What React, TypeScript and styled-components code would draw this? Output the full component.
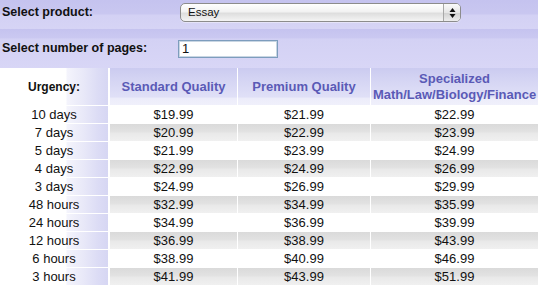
import styled, { createGlobalStyle } from 'styled-components';

const GlobalStyle = createGlobalStyle`
  body {
    margin: 0;
    background: #fff;
    font-family: 'Liberation Sans', Arial, sans-serif;
    color: #111;
  }
`;

interface PriceRow {
  urgency: string;
  standard: number;
  premium: number;
  special: number;
}

const rows: PriceRow[] = [
  { urgency: '10 days', standard: 19.99, premium: 21.99, special: 22.99 },
  { urgency: '7 days', standard: 20.99, premium: 22.99, special: 23.99 },
  { urgency: '5 days', standard: 21.99, premium: 23.99, special: 24.99 },
  { urgency: '4 days', standard: 22.99, premium: 24.99, special: 26.99 },
  { urgency: '3 days', standard: 24.99, premium: 26.99, special: 29.99 },
  { urgency: '48 hours', standard: 32.99, premium: 34.99, special: 35.99 },
  { urgency: '24 hours', standard: 34.99, premium: 36.99, special: 39.99 },
  { urgency: '12 hours', standard: 36.99, premium: 38.99, special: 43.99 },
  { urgency: '6 hours', standard: 38.99, premium: 40.99, special: 46.99 },
  { urgency: '3 hours', standard: 41.99, premium: 43.99, special: 51.99 },
];

const money = (n: number) => `$${n.toFixed(2)}`;

const PriceCalculator = (): JSX.Element => {
  return (
    <Wrapper>
      <GlobalStyle />
      <ProductRow>
        <Label>Select product:</Label>
        <SelectBox role="listbox" aria-label="Product">
          <SelectValue>Essay</SelectValue>
          <SelectArrows>
            <svg width="7" height="12" viewBox="0 0 7 12">
              <path d="M3.5 1 L6.5 5 L0.5 5 Z" fill="#111" />
              <path d="M0.5 7 L6.5 7 L3.5 11 Z" fill="#111" />
            </svg>
          </SelectArrows>
        </SelectBox>
      </ProductRow>
      <PagesRow>
        <Label>Select number of pages:</Label>
        <PagesInput type="text" defaultValue="1" aria-label="Number of pages" />
      </PagesRow>
      <Table>
        <colgroup>
          <col style={{ width: 110 }} />
          <col style={{ width: 128 }} />
          <col style={{ width: 133 }} />
          <col style={{ width: 167 }} />
        </colgroup>
        <thead>
          <tr>
            <UrgencyHead>Urgency:</UrgencyHead>
            <QualityHead>Standard Quality</QualityHead>
            <QualityHead>Premium Quality</QualityHead>
            <QualityHead $last>
              Specialized
              <br />
              Math/Law/Biology/Finance
            </QualityHead>
          </tr>
        </thead>
        <tbody>
          {rows.map((row, i) => (
            <tr key={row.urgency}>
              <UrgencyCell>{row.urgency}</UrgencyCell>
              <PriceCell $shaded={i % 2 === 1}>{money(row.standard)}</PriceCell>
              <PriceCell $shaded={i % 2 === 1}>{money(row.premium)}</PriceCell>
              <PriceCell $shaded={i % 2 === 1} $last>
                {money(row.special)}
              </PriceCell>
            </tr>
          ))}
        </tbody>
      </Table>
    </Wrapper>
  );
};

const Wrapper = styled.div`
  width: 538px;
`;
const ProductRow = styled.div`
  display: flex;
  align-items: flex-start;
  height: 29px;
  padding-top: 3px;
  box-sizing: border-box;
  background: linear-gradient(
    to bottom,
    #c5c3ef 0%,
    #c9c7f0 48%,
    #d3d1f4 52%,
    #d6d4f5 100%
  );
`;
const PagesRow = styled.div`
  display: flex;
  align-items: center;
  height: 39px;
  background: linear-gradient(
    to bottom,
    #c5c3ef 0%,
    #cac8f1 22%,
    #d3d1f4 26%,
    #d8d6f6 100%
  );
`;
const Label = styled.div`
  width: 178px;
  box-sizing: border-box;
  padding-left: 2px;
  font-size: 12.5px;
  font-weight: bold;
  line-height: 19px;
  color: #111;
`;
const SelectBox = styled.div`
  display: flex;
  align-items: stretch;
  margin-left: 2px;
  width: 281px;
  height: 19px;
  box-sizing: border-box;
  border: 1px solid #8c8c8c;
  border-radius: 5px;
  background: linear-gradient(to bottom, #ffffff 0%, #f2f2f2 45%, #dedede 55%, #f4f4f4 100%);
  box-shadow: 0 1px 0 rgba(255, 255, 255, 0.4);
`;
const SelectValue = styled.div`
  flex: 1;
  padding-left: 7px;
  font-size: 11.5px;
  line-height: 17px;
  color: #111;
`;
const SelectArrows = styled.div`
  width: 16px;
  display: flex;
  align-items: center;
  justify-content: center;
  border-left: 1px solid #a8a8a8;
  border-radius: 0 4px 4px 0;
  background: linear-gradient(to bottom, #fafafa 0%, #e6e6e6 50%, #d2d2d2 55%, #ededed 100%);
`;
const PagesInput = styled.input`
  width: 100px;
  height: 18px;
  box-sizing: border-box;
  margin: 0 0 0 0;
  padding: 0 3px;
  border: 1px solid #7d9dbd;
  box-shadow: inset 0 0 0 1px #c9d6e3;
  background: #fff;
  font-family: 'Liberation Sans', Arial, sans-serif;
  font-size: 13px;
  color: #111;
  outline: none;
`;
const Table = styled.table`
  width: 538px;
  table-layout: fixed;
  border-collapse: separate;
  border-spacing: 0;
`;
const firstColumn = `
  padding: 0;
  text-align: center;
  border-right: 2px solid #fff;
  border-bottom: 1px solid #fff;
  background: linear-gradient(
    to right,
    #ffffff 0px,
    #ffffff 66px,
    #f4f4fc 67px,
    #e8e8f8 84px,
    #dcdcf5 98px,
    #d6d6f3 108px
  );
`;
const UrgencyHead = styled.th`
  ${firstColumn}
  height: 37px;
  font-size: 12px;
  font-weight: bold;
  color: #111;
`;
const QualityHead = styled.th<{ $last?: boolean }>`
  padding: 0;
  height: 37px;
  text-align: center;
  vertical-align: middle;
  border-right: ${(p) => (p.$last ? 'none' : '1px solid #fff')};
  border-bottom: 1px solid #fff;
  background: linear-gradient(
    to bottom,
    #cbcbf0 0%,
    #d4d4f3 30%,
    #e0e0f7 78%,
    #ececfa 82%,
    #f0f0fb 100%
  );
  font-size: 13px;
  font-weight: bold;
  line-height: 16px;
  color: #5a5ab6;
`;
const UrgencyCell = styled.td`
  ${firstColumn}
  height: 17px;
  font-size: 13px;
  line-height: 17px;
  color: #111;
`;
const PriceCell = styled.td<{ $shaded?: boolean; $last?: boolean }>`
  padding: 0;
  height: 17px;
  text-align: center;
  border-right: ${(p) => (p.$last ? 'none' : '1px solid #fff')};
  border-bottom: 1px solid #fff;
  background: ${(p) =>
    p.$shaded
      ? 'linear-gradient(to bottom, #dadada 0%, #e2e2e2 45%, #e9e9e9 55%, #f0f0f0 100%)'
      : '#fff'};
  font-size: 13px;
  line-height: 17px;
  color: #111;
`;

export default PriceCalculator;
